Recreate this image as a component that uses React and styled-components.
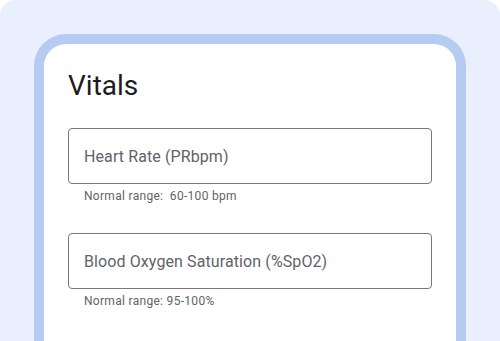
import React from "react";
import styled, { createGlobalStyle } from "styled-components";

const GlobalStyle = createGlobalStyle`
  html, body {
    margin: 0;
    padding: 0;
    background: #ffffff;
  }
  body {
    font-family: Roboto, "Noto Sans", Arial, sans-serif;
  }
`;

const Page = styled.div`
  width: 500px;
  height: 341px;
  box-sizing: border-box;
  background: #e9effd;
  border-radius: 16px 16px 0 0;
  padding: 34px 34px 0;
  overflow: hidden;
`;

const Frame = styled.div`
  box-sizing: border-box;
  height: 100%;
  border: 10px solid #b5cbf1;
  border-bottom: none;
  border-radius: 32px 32px 0 0;
  background: #ffffff;
  padding: 24px 24px 0;
`;

const Title = styled.h1`
  margin: 0;
  font-size: 28px;
  line-height: 36px;
  font-weight: 400;
  color: #1d1b20;
`;

const Fields = styled.div`
  display: flex;
  flex-direction: column;
  gap: 29px;
  margin-top: 24px;
`;

const Field = styled.div`
  display: flex;
  flex-direction: column;
`;

const Input = styled.input`
  box-sizing: border-box;
  width: 364px;
  height: 56px;
  border: 1px solid #79747e;
  border-radius: 4px;
  padding: 0 15px;
  font-family: Roboto, Arial, sans-serif;
  font-size: 16px;
  letter-spacing: 0.1px;
  color: #1d1b20;
  background: transparent;
  outline: none;

  &::placeholder {
    color: #5f6368;
  }
`;

const Helper = styled.div`
  margin-top: 4px;
  padding-left: 16px;
  font-size: 12px;
  line-height: 16px;
  letter-spacing: 0.3px;
  color: #5f6368;
  white-space: pre;
`;

const fields = [
  { label: "Heart Rate (PRbpm)", help: "Normal range:  60-100 bpm" },
  { label: "Blood Oxygen Saturation (%SpO2)", help: "Normal range: 95-100%" },
];

export default function App() {
  return (
    <>
      <GlobalStyle />
      <Page>
        <Frame>
          <Title>Vitals</Title>
          <Fields>
            {fields.map((f) => (
              <Field key={f.label}>
                <Input placeholder={f.label} aria-label={f.label} />
                <Helper>{f.help}</Helper>
              </Field>
            ))}
          </Fields>
        </Frame>
      </Page>
    </>
  );
}
